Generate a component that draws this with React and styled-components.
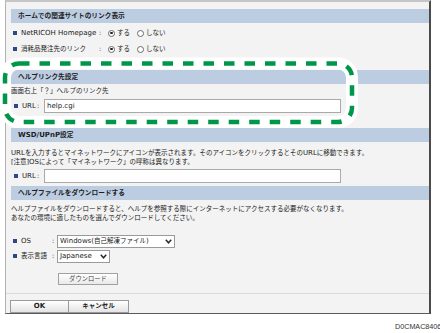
import React from "react";
import styled, { createGlobalStyle, css } from "styled-components";

const Global = createGlobalStyle`
  html, body { margin: 0; padding: 0; background: #fff; }
  body { font-family: "DejaVu Sans", "Noto Sans CJK JP", sans-serif; color: #222; }
`;

const Page = styled.div`
  position: relative;
  width: 440px;
  height: 333px;
  overflow: hidden;
  padding-left: 5px;
  box-sizing: border-box;
`;

const Panel = styled.div`
  width: 426px;
  height: 314px;
  box-sizing: border-box;
  background: #f3f3f3;
  border-top: 2px solid #c6c6c6;
  border-left: 1px solid #b2b2b2;
  border-right: 2px solid #4b4b4b;
  border-bottom: 1px solid #5a5a5a;
  padding: 7px 0 0 5px;
  display: flex;
  flex-direction: column;
  font-size: 6.5px;
  line-height: 1;
  color: #1a1a1a;
`;

const Header = styled.div`
  flex: none;
  height: 14px;
  margin-top: ${(p) => p.$mt || 0}px;
  background: #bccde2;
  display: flex;
  align-items: center;
  padding-left: 7px;
  font-weight: bold;
  font-size: 6.7px;
  color: #1e1e1e;
  white-space: nowrap;
`;

const L = styled.span`
  font-size: 7px;
`;

const Row = styled.div`
  flex: none;
  display: flex;
  align-items: center;
  height: ${(p) => p.$h || 16}px;
  margin-top: ${(p) => p.$mt || 0}px;
  white-space: nowrap;
`;

const Bullet = styled.span`
  flex: none;
  width: 4px;
  height: 4px;
  background: #2e4785;
  margin-left: ${(p) => p.$ml ?? 2}px;
  margin-right: 4px;
`;

const Label = styled.span`
  flex: none;
  width: ${(p) => p.$w}px;
  white-space: nowrap;
`;

const Colon = styled.span`
  flex: none;
  width: ${(p) => p.$w}px;
`;

const Radio = styled.span`
  flex: none;
  position: relative;
  width: 7px;
  height: 7px;
  box-sizing: border-box;
  border-radius: 50%;
  border: 1px solid #6a6a6a;
  background: #fff;
  margin-right: 2px;
  ${(p) =>
    p.$on &&
    css`
      &::after {
        content: "";
        position: absolute;
        left: 1.25px;
        top: 1.25px;
        width: 2.5px;
        height: 2.5px;
        border-radius: 50%;
        background: #222;
      }
    `}
`;

const Option = styled.span`
  margin-right: ${(p) => p.$mr || 0}px;
`;

const TextBlock = styled.div`
  flex: none;
  padding-top: ${(p) => p.$pt || 0}px;
  line-height: ${(p) => p.$lh}px;
  white-space: nowrap;
`;

const Line = styled.div`
  height: ${(p) => p.$h}px;
  line-height: ${(p) => p.$h}px;
  flex: none;
  white-space: nowrap;
`;

const Input = styled.div`
  flex: none;
  width: ${(p) => p.$w}px;
  height: 14px;
  box-sizing: border-box;
  background: #fff;
  border: 1px solid #a9a9a9;
  display: flex;
  align-items: center;
  padding-left: 2px;
  font-size: 7px;
  color: #222;
`;

const Select = styled.div`
  flex: none;
  width: ${(p) => p.$w}px;
  height: 13px;
  box-sizing: border-box;
  background: #fff;
  border: 1px solid #9a9a9a;
  display: flex;
  align-items: center;
  justify-content: space-between;
  padding: 0 2px 0 2px;
  color: #222;
`;

const Chevron = () => (
  <svg width="7" height="5" viewBox="0 0 7 5">
    <polyline points="0.8,0.8 3.5,3.8 6.2,0.8" fill="none" stroke="#2a2a2a" strokeWidth="1.5" />
  </svg>
);

const SmallButton = styled.div`
  flex: none;
  width: 60px;
  height: 12px;
  margin-top: 10px;
  margin-left: 47px;
  box-sizing: border-box;
  border: 1px solid #a0a0a0;
  background: linear-gradient(#ffffff, #e9e9e9);
  display: flex;
  align-items: center;
  justify-content: center;
  color: #444;
  font-size: 6.3px;
`;

const Separator = styled.div`
  flex: none;
  height: 1px;
  margin: 8px 0 0 -5px;
  background: #dadada;
`;

const ButtonBar = styled.div`
  flex: none;
  display: flex;
  margin: 6px 0 0 -1px;
`;

const BarButton = styled.div`
  flex: none;
  width: ${(p) => p.$w}px;
  height: 13px;
  box-sizing: border-box;
  border: 1px solid #9a9a9a;
  border-left-width: ${(p) => (p.$first ? 1 : 0)}px;
  background: linear-gradient(#ffffff, #e4e4e4);
  display: flex;
  align-items: center;
  justify-content: center;
  font-weight: bold;
  font-size: 6.5px;
  color: #222;
`;

const Code = styled.div`
  margin-top: 9px;
  padding-left: 390px;
  font-family: "Liberation Sans", Arial, sans-serif;
  font-size: 7.2px;
  line-height: 8px;
  color: #333;
  white-space: nowrap;
`;

const Callout = styled.svg`
  position: absolute;
  left: 0;
  top: 50px;
  pointer-events: none;
`;

export default function App() {
  return (
    <Page>
      <Global />
      <Panel>
        <Header>ホームでの関連サイトのリンク表示</Header>
        <Row $mt={2}>
          <Bullet />
          <Label $w={78}>
            <L>NetRICOH Homepage</L>
          </Label>
          <Colon $w={9}>:</Colon>
          <Radio $on />
          <Option $mr={7}>する</Option>
          <Radio />
          <Option>しない</Option>
        </Row>
        <Row>
          <Bullet />
          <Label $w={78}>消耗品発注先のリンク</Label>
          <Colon $w={9}>:</Colon>
          <Radio $on />
          <Option $mr={7}>する</Option>
          <Radio />
          <Option>しない</Option>
        </Row>

        <Header $mt={13}>ヘルプリンク先設定</Header>
        <Line $h={15}>画面右上「？」ヘルプのリンク先</Line>
        <Row $h={14}>
          <Bullet $ml={3} />
          <Label $w={15}>
            <L>URL</L>
          </Label>
          <Colon $w={7}>:</Colon>
          <Input $w={297}>help.cgi</Input>
        </Row>

        <Header $mt={15}>
          <L>WSD/UPnP</L>設定
        </Header>
        <TextBlock $pt={7} $lh={8.5}>
          <div>
            <L>URL</L>を入力するとマイネットワークにアイコンが表示されます。そのアイコンをクリックするとその<L>URL</L>に移動できます。
          </div>
          <div>
            [注意]<L>OS</L>によって「マイネットワーク」の呼称は異なります。
          </div>
        </TextBlock>
        <Row $h={14} $mt={3}>
          <Bullet $ml={3} />
          <Label $w={15}>
            <L>URL</L>
          </Label>
          <Colon $w={7}>:</Colon>
          <Input $w={297} />
        </Row>

        <Header $mt={3}>ヘルプファイルをダウンロードする</Header>
        <TextBlock $pt={4.5} $lh={9}>
          <div>ヘルプファイルをダウンロードすると、ヘルプを参照する際にインターネットにアクセスする必要がなくなります。</div>
          <div>あなたの環境に適したものを選んでダウンロードしてください。</div>
        </TextBlock>
        <Row $h={14} $mt={11.5}>
          <Bullet />
          <Label $w={31}>
            <L>OS</L>
          </Label>
          <Colon $w={5}>:</Colon>
          <Select $w={118}>
            <span>
              <L>Windows(</L>自己解凍ファイル<L>)</L>
            </span>
            <Chevron />
          </Select>
        </Row>
        <Row $h={14} $mt={1}>
          <Bullet />
          <Label $w={31}>表示言語</Label>
          <Colon $w={5}>:</Colon>
          <Select $w={53}>
            <L>Japanese</L>
            <Chevron />
          </Select>
        </Row>
        <SmallButton>ダウンロード</SmallButton>
        <Separator />
        <ButtonBar>
          <BarButton $w={59} $first>
            <L>OK</L>
          </BarButton>
          <BarButton $w={60}>キャンセル</BarButton>
        </ButtonBar>
      </Panel>
      <Code>D0CMAC8406</Code>
      <Callout width="370" height="90" viewBox="0 0 370 90">
        <rect x="5" y="13.5" width="347" height="58.5" rx="14" ry="14" fill="none" stroke="#ffffff" strokeWidth="12" />
        <rect
          x="5"
          y="13.5"
          width="347"
          height="58.5"
          rx="14"
          ry="14"
          fill="none"
          stroke="#00964a"
          strokeWidth="4.5"
          strokeDasharray="10.5 10"
        />
      </Callout>
    </Page>
  );
}
